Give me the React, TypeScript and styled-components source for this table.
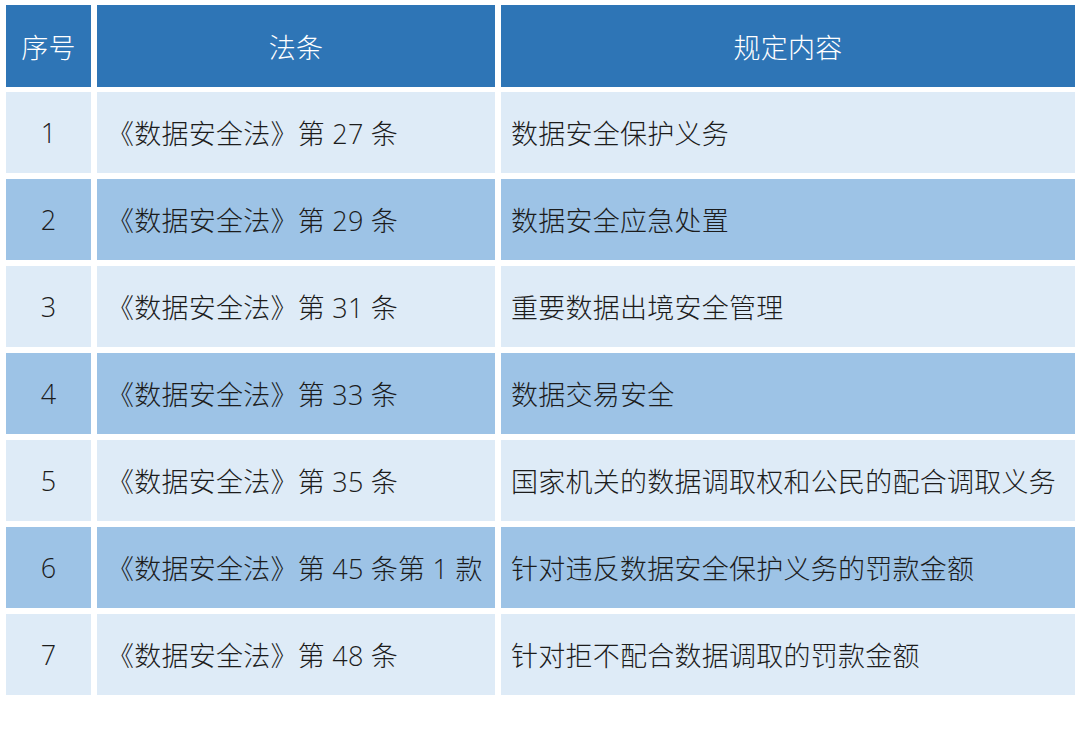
import styled, { createGlobalStyle } from "styled-components";

const GlobalStyle = createGlobalStyle`
  html, body {
    margin: 0;
    padding: 0;
    background: #ffffff;
  }
  body {
    font-family: "Open Sans", "Noto Sans CJK SC", sans-serif;
    font-weight: 300;
  }
`;

const Table = styled.div`
  display: grid;
  grid-template-columns: 85px 398px 574px;
  grid-auto-rows: 81px;
  column-gap: 6px;
  row-gap: 6px;
  padding: 5px 6px;
  width: 1080px;
  box-sizing: border-box;
`;

const HeadCell = styled.div`
  background: #2e75b6;
  color: #ffffff;
  font-size: 27px;
  letter-spacing: 0.25px;
  display: flex;
  align-items: center;
  justify-content: center;
  height: 82px;
`;

const Cell = styled.div<{ $dark: boolean; $center?: boolean }>`
  background: ${(p) => (p.$dark ? "#9dc3e6" : "#deebf7")};
  color: #1c1c1c;
  font-size: 27px;
  letter-spacing: 0.25px;
  display: flex;
  align-items: center;
  justify-content: ${(p) => (p.$center ? "center" : "flex-start")};
  padding: 0 ${(p) => (p.$center ? "0" : "10px")};
  white-space: nowrap;
  overflow: hidden;
`;

const rows = [
  ["1", "《数据安全法》第 27 条", "数据安全保护义务"],
  ["2", "《数据安全法》第 29 条", "数据安全应急处置"],
  ["3", "《数据安全法》第 31 条", "重要数据出境安全管理"],
  ["4", "《数据安全法》第 33 条", "数据交易安全"],
  ["5", "《数据安全法》第 35 条", "国家机关的数据调取权和公民的配合调取义务"],
  ["6", "《数据安全法》第 45 条第 1 款", "针对违反数据安全保护义务的罚款金额"],
  ["7", "《数据安全法》第 48 条", "针对拒不配合数据调取的罚款金额"],
];

export default function App() {
  return (
    <>
      <GlobalStyle />
      <Table>
        <HeadCell>序号</HeadCell>
        <HeadCell>法条</HeadCell>
        <HeadCell>规定内容</HeadCell>
        {rows.map((r, i) => {
          const dark = i % 2 === 1;
          return [
            <Cell key={`${i}a`} $dark={dark} $center>
              {r[0]}
            </Cell>,
            <Cell key={`${i}b`} $dark={dark}>
              {r[1]}
            </Cell>,
            <Cell key={`${i}c`} $dark={dark}>
              {r[2]}
            </Cell>,
          ];
        })}
      </Table>
    </>
  );
}
